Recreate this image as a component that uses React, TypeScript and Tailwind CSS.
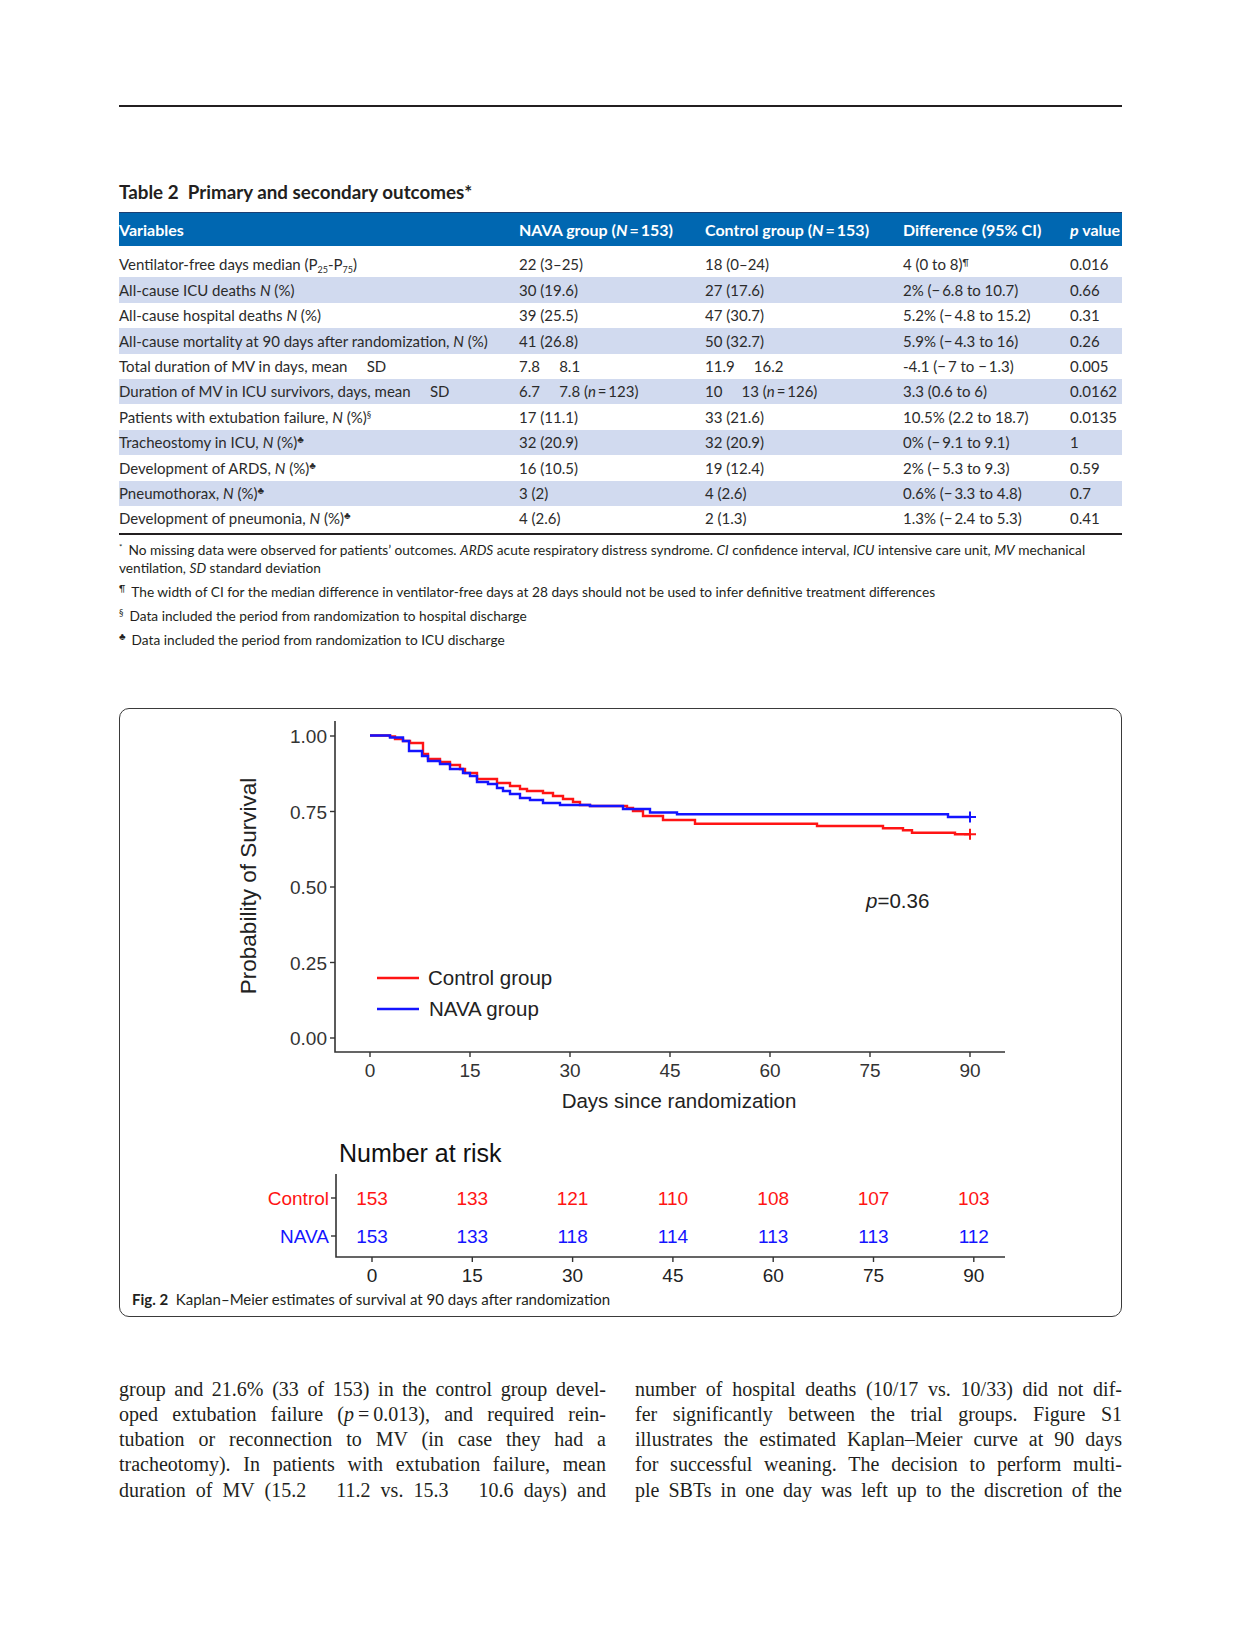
import React from "react";

type Row = [React.ReactNode, React.ReactNode, React.ReactNode, React.ReactNode, string];

const club = <sup className="text-[10px] leading-none">♣</sup>;

const rows: Row[] = [
  [<>Ventilator-free days median (P<sub className="text-[9px]">25</sub>-P<sub className="text-[9px]">75</sub>)</>, "22 (3–25)", "18 (0–24)", <>4 (0 to 8)<sup className="text-[9px]">¶</sup></>, "0.016"],
  [<>All-cause ICU deaths <i>N</i> (%)</>, "30 (19.6)", "27 (17.6)", "2% (−\u20096.8 to 10.7)", "0.66"],
  [<>All-cause hospital deaths <i>N</i> (%)</>, "39 (25.5)", "47 (30.7)", "5.2% (−\u20094.8 to 15.2)", "0.31"],
  [<>All-cause mortality at 90 days after randomization, <i>N</i> (%)</>, "41 (26.8)", "50 (32.7)", "5.9% (−\u20094.3 to 16)", "0.26"],
  ["Total duration of MV in days, mean     SD", "7.8     8.1", "11.9     16.2", "-4.1 (−\u20097 to −\u20091.3)", "0.005"],
  ["Duration of MV in ICU survivors, days, mean     SD", <>6.7     7.8 (<i>n</i>{"\u2009=\u2009"}123)</>, <>10     13 (<i>n</i>{"\u2009=\u2009"}126)</>, "3.3 (0.6 to 6)", "0.0162"],
  [<>Patients with extubation failure, <i>N</i> (%)<sup className="text-[9px]">§</sup></>, "17 (11.1)", "33 (21.6)", "10.5% (2.2 to 18.7)", "0.0135"],
  [<>Tracheostomy in ICU, <i>N</i> (%){club}</>, "32 (20.9)", "32 (20.9)", "0% (−\u20099.1 to 9.1)", "1"],
  [<>Development of ARDS, <i>N</i> (%){club}</>, "16 (10.5)", "19 (12.4)", "2% (−\u20095.3 to 9.3)", "0.59"],
  [<>Pneumothorax, <i>N</i> (%){club}</>, "3 (2)", "4 (2.6)", "0.6% (−\u20093.3 to 4.8)", "0.7"],
  [<>Development of pneumonia, <i>N</i> (%){club}</>, "4 (2.6)", "2 (1.3)", "1.3% (−\u20092.4 to 5.3)", "0.41"],
];

// curve steps in page pixels: [x where it drops, new y]
const blueSteps: [number, number][] = [
  [390, 736.5], [403, 740], [409, 750], [422, 755], [428, 760], [440, 763], [450, 768], [463, 772],
  [470, 775], [477, 781], [488, 783], [497, 787], [503, 790], [510, 793], [520, 797], [530, 799],
  [543, 802], [560, 804], [590, 805], [623, 808], [650, 811.5], [677, 813.3], [948, 816],
];
const redSteps: [number, number][] = [
  [390, 735.5], [395, 738], [403, 740], [410, 742], [423, 753], [428, 758], [440, 761], [450, 764],
  [460, 768], [465, 772], [477, 778], [497, 782], [510, 785], [520, 788], [527, 790], [543, 792],
  [553, 795], [563, 798], [573, 801], [580, 804], [590, 805], [627, 807], [633, 810], [643, 815],
  [663, 819], [695, 822.7], [817, 825], [883, 827.3], [903, 829.3], [912, 831.7], [955, 833.3],
];

function stepPath(steps: [number, number][]) {
  let d = "M370,734.5";
  for (const [x, y] of steps) d += ` H${x} V${y}`;
  return d + " H970";
}

const yTicks = [
  { y: 735, label: "1.00" },
  { y: 810.5, label: "0.75" },
  { y: 886, label: "0.50" },
  { y: 961.5, label: "0.25" },
  { y: 1037, label: "0.00" },
];
const days = [0, 15, 30, 45, 60, 75, 90];
const control = [153, 133, 121, 110, 108, 107, 103];
const nava = [153, 133, 118, 114, 113, 113, 112];

function Chart() {
  return (
    <svg width="1002" height="580" viewBox="120 708 1002 580" className="block font-['Liberation_Sans',Arial,sans-serif]">
      {/* axes */}
      <path d="M335,720 V1051 H1005" fill="none" stroke="#333" strokeWidth="1.6" />
      {yTicks.map((t) => (
        <g key={t.label}>
          <line x1="330" x2="335" y1={t.y} y2={t.y} stroke="#333" strokeWidth="1.4" />
          <text x="327" y={t.y + 7} textAnchor="end" fontSize="19" fill="#333">{t.label}</text>
        </g>
      ))}
      {days.map((d) => {
        const x = 370 + (d * 100) / 15;
        return (
          <g key={d}>
            <line x1={x} x2={x} y1="1051" y2="1056" stroke="#333" strokeWidth="1.4" />
            <text x={x} y="1076" textAnchor="middle" fontSize="19" fill="#333">{d}</text>
          </g>
        );
      })}
      <text x="679" y="1107" textAnchor="middle" fontSize="20.5" fill="#222">Days since randomization</text>
      <text transform="translate(256,885) rotate(-90)" textAnchor="middle" fontSize="22.5" fill="#222">Probability of Survival</text>

      {/* curves */}
      <path d={stepPath(redSteps)} fill="none" stroke="#ff1414" strokeWidth="2.4" />
      <path d={stepPath(blueSteps)} fill="none" stroke="#1414ff" strokeWidth="2.4" />
      <path d="M964,816 H976 M970,810.5 V821.5" stroke="#1414ff" strokeWidth="2" />
      <path d="M964,833.3 H976 M970,827.8 V838.8" stroke="#ff1414" strokeWidth="2" />

      {/* legend */}
      <line x1="377" x2="419" y1="977" y2="977" stroke="#ff1414" strokeWidth="2.4" />
      <text x="428" y="984" fontSize="20.5" fill="#222">Control group</text>
      <line x1="377" x2="419" y1="1008" y2="1008" stroke="#1414ff" strokeWidth="2.4" />
      <text x="429" y="1015" fontSize="20.5" fill="#222">NAVA group</text>

      <text x="866" y="907" fontSize="20.5" fill="#222">
        <tspan fontStyle="italic">p</tspan>=0.36
      </text>

      {/* number at risk */}
      <text x="339" y="1161" fontSize="25" fill="#111">Number at risk</text>
      <path d="M336,1173 V1256 H1005" fill="none" stroke="#333" strokeWidth="1.6" />
      <line x1="331" x2="336" y1="1197" y2="1197" stroke="#333" strokeWidth="1.4" />
      <line x1="331" x2="336" y1="1235" y2="1235" stroke="#333" strokeWidth="1.4" />
      <text x="329" y="1204" textAnchor="end" fontSize="19" fill="#ff1414">Control</text>
      <text x="329" y="1242" textAnchor="end" fontSize="19" fill="#1414ff">NAVA</text>
      {days.map((d, i) => {
        const x = 372 + (d * 100.3) / 15;
        return (
          <g key={d}>
            <text x={x} y="1204" textAnchor="middle" fontSize="19" fill="#ff1414">{control[i]}</text>
            <text x={x} y="1242" textAnchor="middle" fontSize="19" fill="#1414ff">{nava[i]}</text>
            <line x1={x} x2={x} y1="1256" y2="1261" stroke="#333" strokeWidth="1.4" />
            <text x={x} y="1281" textAnchor="middle" fontSize="19" fill="#222">{d}</text>
          </g>
        );
      })}
    </svg>
  );
}

const cols = "grid grid-cols-[400px_186px_198px_167px_52px]";

function Line({ children }: { children: React.ReactNode }) {
  return <div className="text-justify [text-align-last:justify]">{children}</div>;
}

function Mark({ children, size }: { children: React.ReactNode; size: string }) {
  return <span className={`relative -top-[5px] mr-[6px] leading-none ${size}`}>{children}</span>;
}

export default function App() {
  return (
    <div className="w-[1240px] min-h-[1647px] bg-white pt-[105px] font-['Lato',sans-serif] text-[#231f20]">
      <div className="ml-[119px] w-[1003px]">
        <div className="h-[2px] bg-[#231f20]" />

        <h2 className="mt-[74px] text-[18.8px] leading-[22px] font-bold">
          Table 2{"\u00a0\u00a0"}Primary and secondary outcomes*
        </h2>

        <div className={`${cols} mt-[9px] h-[34px] items-center border-t border-[#1b3f73] bg-[#0067b1] text-[16px] font-bold text-white`}>
          <div>Variables</div>
          <div>NAVA group (<i>N</i>{"\u2009=\u2009"}153)</div>
          <div>Control group (<i>N</i>{"\u2009=\u2009"}153)</div>
          <div>Difference (95% CI)</div>
          <div className="whitespace-nowrap"><i>p</i> value</div>
        </div>

        <div className="pt-[6px] text-[#2b2b2b]">
          {rows.map((r, i) => (
            <div
              key={i}
              className={`${cols} h-[25.4px] items-center whitespace-pre text-[15px] ${i % 2 === 1 ? "bg-[#d1daef]" : ""}`}
            >
              <div>{r[0]}</div>
              <div>{r[1]}</div>
              <div>{r[2]}</div>
              <div>{r[3]}</div>
              <div>{r[4]}</div>
            </div>
          ))}
        </div>
        <div className="mt-[2px] h-[1.5px] bg-[#231f20]" />

        <div className="mt-[6px] text-[13.7px] leading-[18px]">
          <div className="mb-[6px]">
            <div className="whitespace-nowrap">
              <Mark size="text-[8px]">*</Mark>
              No missing data were observed for patients’ outcomes. <i>ARDS</i> acute respiratory distress syndrome. <i>CI</i> confidence
              interval, <i>ICU</i> intensive care unit, <i>MV</i> mechanical
            </div>
            <div>
              ventilation, <i>SD</i> standard deviation
            </div>
          </div>
          <p className="mb-[6px]">
            <Mark size="text-[9px]">¶</Mark>
            The width of CI for the median difference in ventilator-free days at 28 days should not be used to infer definitive treatment differences
          </p>
          <p className="mb-[6px]">
            <Mark size="text-[9px]">§</Mark>
            Data included the period from randomization to hospital discharge
          </p>
          <p>
            <Mark size="text-[10px]">♣</Mark>
            Data included the period from randomization to ICU discharge
          </p>
        </div>

        <div className="mt-[59px] rounded-[10px] border border-[#3a3a3a]">
          <Chart />
          <div className="mb-[7px] h-[20px] pl-[12px] text-[15px] leading-[20px]">
            <b>Fig. 2</b>
            {"\u00a0\u00a0"}Kaplan–Meier estimates of survival at 90 days after randomization
          </div>
        </div>

        <div className="mt-[60px] grid grid-cols-[487px_487px] gap-x-[29px] font-['Liberation_Serif',serif] text-[20px] leading-[25.2px] text-[#231f20]">
          <div>
            <Line>group and 21.6% (33 of 153) in the control group devel-</Line>
            <Line>oped extubation failure (<i>p</i>{"\u2009=\u2009"}0.013), and required rein-</Line>
            <Line>tubation or reconnection to MV (in case they had a</Line>
            <Line>tracheotomy). In patients with extubation failure, mean</Line>
            <Line>duration of MV (15.2 {"\u2003"}11.2 vs. 15.3 {"\u2003"}10.6 days) and</Line>
          </div>
          <div>
            <Line>number of hospital deaths (10/17 vs. 10/33) did not dif-</Line>
            <Line>fer significantly between the trial groups. Figure S1</Line>
            <Line>illustrates the estimated Kaplan–Meier curve at 90 days</Line>
            <Line>for successful weaning. The decision to perform multi-</Line>
            <Line>ple SBTs in one day was left up to the discretion of the</Line>
          </div>
        </div>
      </div>
    </div>
  );
}
